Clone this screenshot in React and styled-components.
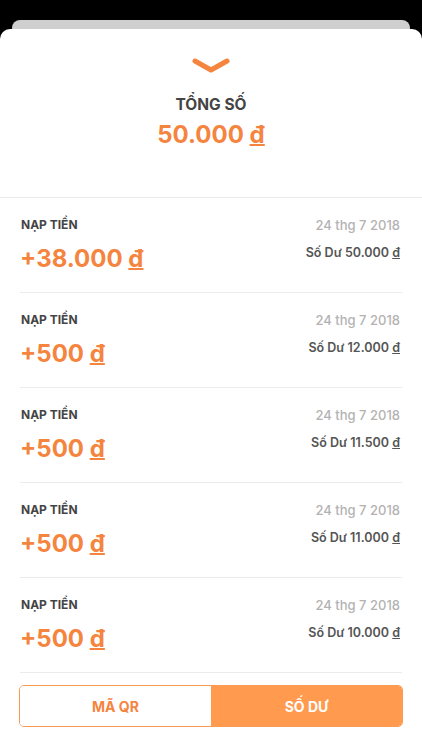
import React from "react";
import styled, { createGlobalStyle } from "styled-components";

const GlobalStyle = createGlobalStyle`
  html, body {
    margin: 0;
    padding: 0;
    background: #000;
  }
  body {
    font-family: Inter, "Noto Sans", "Liberation Sans", sans-serif;
    -webkit-font-smoothing: antialiased;
  }
`;

const transactions = [
  { amount: "+38.000", date: "24 thg 7 2018", balance: "50.000" },
  { amount: "+500", date: "24 thg 7 2018", balance: "12.000" },
  { amount: "+500", date: "24 thg 7 2018", balance: "11.500" },
  { amount: "+500", date: "24 thg 7 2018", balance: "11.000" },
  { amount: "+500", date: "24 thg 7 2018", balance: "10.000" },
];

const App = () => {
  return (
    <>
      <GlobalStyle />
      <Screen>
        <BackCard />
        <Sheet>
          <Header>
            <svg width="40" height="20" viewBox="0 0 40 20">
              <path
                d="M4 5 L20 14 L36 5"
                fill="none"
                stroke="#f5843e"
                strokeWidth="5"
                strokeLinecap="round"
                strokeLinejoin="round"
              />
            </svg>
            <Title>TỔNG SỐ</Title>
            <Total>
              50.000 <Dong>đ</Dong>
            </Total>
          </Header>
          <List>
            {transactions.map((t, i) => (
              <Row key={i}>
                <TopLine>
                  <Label>NẠP TIỀN</Label>
                  <DateText>{t.date}</DateText>
                </TopLine>
                <BottomLine>
                  <Amount>
                    {t.amount} <Dong>đ</Dong>
                  </Amount>
                  <Balance>
                    Số Dư {t.balance} <Dong>đ</Dong>
                  </Balance>
                </BottomLine>
              </Row>
            ))}
          </List>
          <Tabs>
            <Tab>MÃ QR</Tab>
            <Tab active>SỐ DƯ</Tab>
          </Tabs>
        </Sheet>
      </Screen>
    </>
  );
};

const Screen = styled.div`
  width: 422px;
  height: 750px;
  padding-top: 20px;
  box-sizing: border-box;
  display: flex;
  flex-direction: column;
  overflow: hidden;
`;

const BackCard = styled.div`
  height: 9px;
  margin: 0 12px;
  background: #cfcfcf;
  border-radius: 8px 8px 0 0;
`;

const Sheet = styled.div`
  flex: 1;
  background: #fff;
  border-radius: 10px 10px 0 0;
  display: flex;
  flex-direction: column;
`;

const Header = styled.div`
  display: flex;
  flex-direction: column;
  align-items: center;
  padding: 27px 0 47px;
  border-bottom: 1px solid #ececec;

  svg {
    display: block;
  }
`;

const Title = styled.div`
  margin-top: 19px;
  font-size: 15.5px;
  line-height: 20px;
  font-weight: 700;
  color: #444;
`;

const Total = styled.div`
  margin-top: 5px;
  font-size: 24px;
  line-height: 30px;
  font-weight: 700;
  color: #f5843e;
`;

const Dong = styled.span`
  text-decoration: underline;
  text-underline-offset: 1px;
  text-decoration-thickness: 1.5px;
`;

const List = styled.div`
  padding: 0 20px;
  display: flex;
  flex-direction: column;
`;

const Row = styled.div`
  padding: 19px 0 19px;
  border-bottom: 1px solid #ececec;
  display: flex;
  flex-direction: column;
  gap: 12px;
`;

const TopLine = styled.div`
  display: flex;
  justify-content: space-between;
  align-items: center;
`;

const Label = styled.div`
  font-size: 12px;
  line-height: 16px;
  font-weight: 700;
  color: #444;
  padding-left: 1px;
`;

const DateText = styled.div`
  font-size: 13px;
  line-height: 16px;
  font-weight: 500;
  color: #b3b3b3;
  padding-right: 2px;
`;

const BottomLine = styled.div`
  display: flex;
  justify-content: space-between;
  align-items: flex-start;
`;

const Amount = styled.div`
  font-size: 24px;
  line-height: 28px;
  font-weight: 700;
  color: #f5843e;
`;

const Balance = styled.div`
  font-size: 12.5px;
  line-height: 16px;
  font-weight: 600;
  color: #555;
  padding-right: 2px;

  ${Dong} {
    text-decoration-thickness: 1px;
  }
`;

const Tabs = styled.div`
  margin: 12px 19px 0;
  height: 42px;
  display: grid;
  grid-template-columns: 1fr 1fr;
  border: 1px solid #fb9a55;
  border-radius: 5px;
  overflow: hidden;
  box-sizing: border-box;
`;

const Tab = styled.div`
  display: flex;
  align-items: center;
  justify-content: center;
  font-size: 14px;
  font-weight: 700;
  background: ${(p) => (p.active ? "#ff9a4f" : "#fff")};
  color: ${(p) => (p.active ? "#fff" : "#f5843e")};
`;

export default App;
